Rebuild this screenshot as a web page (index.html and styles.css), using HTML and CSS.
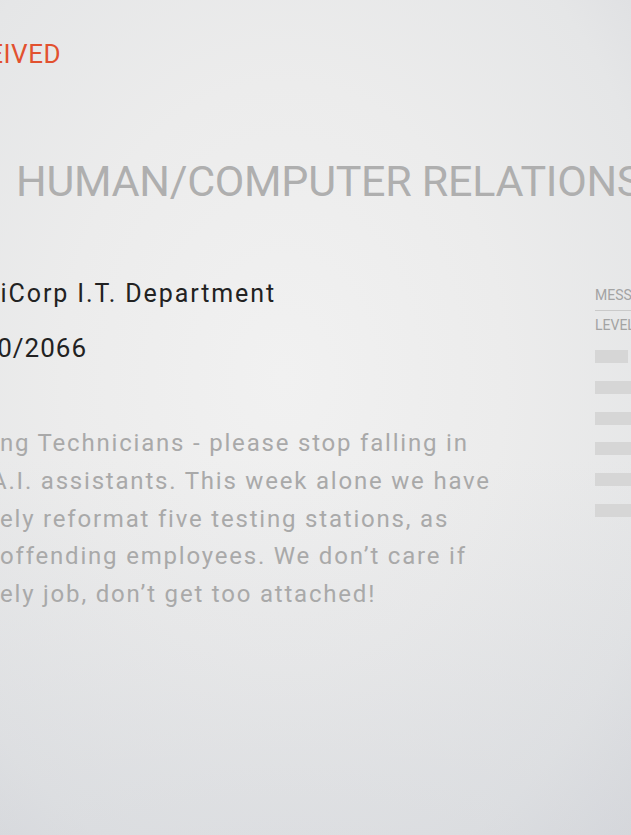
FILE: index.html
```html
<!DOCTYPE html>
<html lang="en">
<head>
<meta charset="utf-8">
<title>Message</title>
<link rel="stylesheet" href="styles.css">
</head>
<body>
<div class="screen">
  <div class="status"><span>EIVED</span></div>
  <h1 class="title">HUMAN/COMPUTER RELATIONS</h1>
  <div class="row">
    <div class="main">
      <div class="from"><span>iCorp I.T. Department</span></div>
      <div class="date"><span>0/2066</span></div>
      <div class="body">
        <div class="line">ng Technicians - please stop falling in</div>
        <div class="line shift">A.I. assistants. This week alone we have</div>
        <div class="line">ely reformat five testing stations, as</div>
        <div class="line">offending employees. We don’t care if</div>
        <div class="line">ely job, don’t get too attached!</div>
      </div>
    </div>
    <aside class="side">
      <div class="label first">MESSAGE</div>
      <div class="label second">LEVEL</div>
      <div class="bars">
        <div class="bar short"></div>
        <div class="bar"></div>
        <div class="bar"></div>
        <div class="bar"></div>
        <div class="bar"></div>
        <div class="bar"></div>
      </div>
    </aside>
  </div>
</div>
</body>
</html>
```

FILE: styles.css
```css
html, body {
  margin: 0;
  padding: 0;
}
body {
  width: 631px;
  height: 835px;
  overflow: hidden;
  font-family: Roboto, "Liberation Sans", sans-serif;
  background:
    linear-gradient(to bottom, rgba(255,255,255,0) 55%, rgba(196,200,208,0.30) 100%),
    radial-gradient(ellipse at 45% 45%, #f1f1f1 0%, #ececec 45%, #e5e6e7 80%, #dcdde0 100%);
}
.screen {
  padding-top: 41px;
}
.status {
  width: 61px;
  display: flex;
  justify-content: flex-end;
  white-space: nowrap;
  font-size: 26px;
  line-height: 26px;
  color: #e2512f;
  letter-spacing: 0.5px;
}
.title {
  margin: 93px 0 0 16px;
  font-size: 43px;
  line-height: 43px;
  font-weight: 400;
  color: #afafaf;
  white-space: nowrap;
  letter-spacing: -0.3px;
}
.row {
  display: grid;
  grid-template-columns: 595px 1fr;
  margin-top: 78px;
}
.main {
  min-width: 0;
}
.from {
  width: 276px;
  display: flex;
  justify-content: flex-end;
  white-space: nowrap;
  font-size: 25px;
  line-height: 25px;
  color: #222222;
  letter-spacing: 1.9px;
}
.date {
  width: 87px;
  display: flex;
  justify-content: flex-end;
  white-space: nowrap;
  margin-top: 29px;
  font-size: 26px;
  line-height: 26px;
  color: #222222;
  letter-spacing: 1px;
}
.body {
  margin-top: 64px;
  font-size: 24px;
  line-height: 37.75px;
  color: #a9a9a9;
  white-space: nowrap;
  letter-spacing: 1.8px;
}
.line.shift {
  margin-left: -9px;
}
.side {
  padding-top: 7px;
  color: #a3a3a3;
  font-size: 14px;
  line-height: 14px;
  white-space: nowrap;
  overflow: hidden;
}
.label.first {
  padding-bottom: 8px;
  border-bottom: 1px solid #cacaca;
}
.label.second {
  margin-top: 7px;
}
.bars {
  margin-top: 18px;
  display: flex;
  flex-direction: column;
  gap: 17.8px;
}
.bar {
  height: 13px;
  width: 60px;
  background: #d6d6d6;
}
.bar.short {
  width: 33px;
}
```
